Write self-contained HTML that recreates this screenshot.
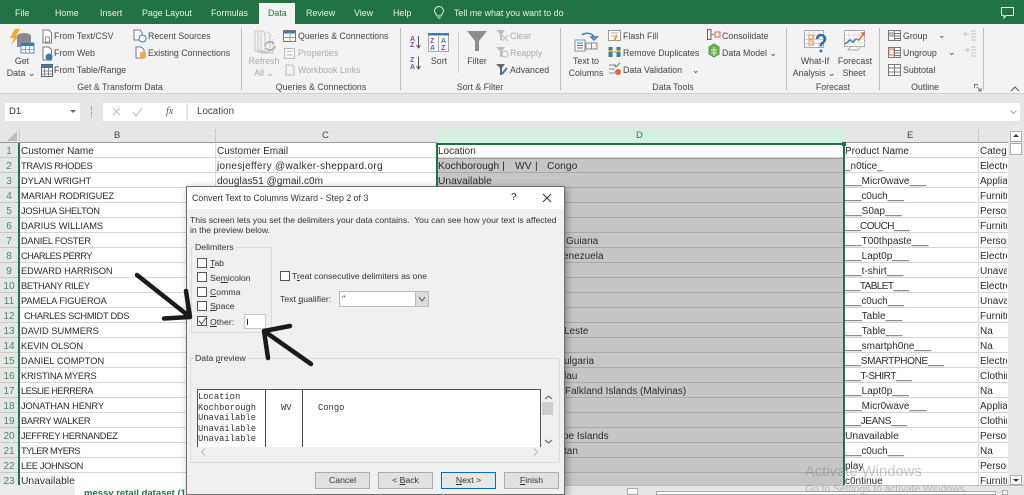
<!DOCTYPE html>
<html><head><meta charset="utf-8"><title>Excel</title>
<style>
*{box-sizing:border-box}
html,body{margin:0;padding:0;width:1024px;height:495px;overflow:hidden;background:#e6e6e6}
body{font-family:"Liberation Sans",sans-serif;color:#333}
#w{position:absolute;left:0;top:0;width:1024px;height:495px;overflow:hidden;filter:blur(.35px)}
.a{position:absolute;white-space:pre}
.t{position:absolute;white-space:pre;font-size:8.8px;line-height:12px;height:12px;color:#444}
.c{transform:translateX(-50%)}
.g{color:#aaa}
.tab{position:absolute;top:7px;font-size:8.9px;line-height:12px;color:#e8f2ec;white-space:pre}
.sep{position:absolute;top:28px;height:62px;width:1px;background:#bdbdbd}
#rows{position:absolute;left:0;top:143px;width:1008px}
.r{position:relative;height:15px;border-bottom:1px solid #d4d4d4;background:#fff}
.r i{position:absolute;left:0;top:0;width:18px;height:15px;background:#e6e6e6;border-bottom:1px solid #c8c8c8;font-style:normal;font-size:10px;line-height:17px;text-align:center;color:#4a8a6a}
.r b{position:absolute;top:0;left:437px;width:406px;height:15px;background:#c6c6c6;border-bottom:1px solid #a9a9a9;font-weight:normal}
.r s{position:absolute;top:0;width:1px;height:15px;background:#dcdcdc}
.r span{position:absolute;top:1px;font-size:10px;line-height:15px;color:#2b2b2b;white-space:pre}
.r span.B{font-size:9.3px}
.B{left:21px}.C{left:217px}.D{left:438px}.E{left:845px}
.F{left:980px;width:27px;overflow:hidden}
.d{font-size:8.7px;line-height:12px;color:#333;position:absolute;white-space:pre}
.u{text-decoration:underline}
.cb{position:absolute;left:197px;width:10px;height:10px;background:#fff;border:1px solid #555}
.btn{position:absolute;top:472px;width:55px;height:17px;background:#e1e1e1;border:1px solid #adadad;font-size:8.7px;line-height:15px;text-align:center;color:#333}
.fs{position:absolute;border:1px solid #dcdcdc}
.m{position:absolute;left:198px;font:8.8px/10px "Liberation Mono",monospace;color:#333;white-space:pre}
</style></head><body><div id="w">

<!-- title / tabs -->
<div class="a" style="left:0;top:0;width:1024px;height:24px;background:#217346"></div>
<div class="a" style="left:259px;top:3px;width:36px;height:22px;background:#f3f3f3"></div>
<span class="tab" style="left:15px">File</span>
<span class="tab" style="left:55px">Home</span>
<span class="tab" style="left:100px">Insert</span>
<span class="tab" style="left:142px">Page Layout</span>
<span class="tab" style="left:211px">Formulas</span>
<span class="tab" style="left:268px;color:#217346">Data</span>
<span class="tab" style="left:306px">Review</span>
<span class="tab" style="left:354px">View</span>
<span class="tab" style="left:393px">Help</span>
<span class="tab" style="left:454px">Tell me what you want to do</span>
<svg class="a" style="left:433px;top:6px" width="12" height="14" viewBox="0 0 12 14" fill="none" stroke="#e8f2ec"><path d="M4 10C3 7 1.500 7 1.500 5a4.500 4.500 0 0 1 9 0C10.500 7 9 7 8 10zM4.500 12h3"/></svg>
<svg class="a" style="left:1001px;top:7px" width="13" height="12" viewBox="0 0 13 12" fill="none" stroke="#e8f2ec"><path d="M.5.500h12v8H5l-2 2.500v-2.500H.5z"/></svg>

<!-- ribbon -->
<div class="a" style="left:0;top:24px;width:1024px;height:70px;background:#f3f3f3;border-bottom:1px solid #d2d2d2"></div>
<div class="sep" style="left:241px"></div><div class="sep" style="left:400px"></div><div class="sep" style="left:560px"></div><div class="sep" style="left:786px"></div><div class="sep" style="left:879px"></div><div class="sep" style="left:983px"></div>
<div class="a" style="left:458px;top:32px;width:1px;height:41px;background:#d0d0d0"></div>

<!-- Get & Transform -->
<svg class="a" style="left:9px;top:28px" width="26" height="28" viewBox="0 0 26 28"><path d="M6 1h5L7 8h3L2 17l3-7H1z" fill="#f0a830"/><ellipse cx="15" cy="8" rx="7" ry="3" fill="#8a8a8a"/><path d="M8 8v11h14V8z" fill="#8a8a8a"/><rect x="12" y="15" width="13" height="10" fill="#fff" stroke="#5d8ab5"/><path d="M12 15h13v3H12z" fill="#3f78ad"/><path d="M12 21.500h13M16.500 18v7M20.500 18v7" stroke="#8aa8c4" fill="none"/></svg>
<span class="t c" style="left:22px;top:55px">Get</span><span class="t c" style="left:21px;top:67px">Data ⌄</span>
<svg class="a" style="left:41px;top:29px" width="12" height="54" viewBox="0 0 12 54" fill="none"><path d="M2 1h6l2.500 3v10H2z" stroke="#777" fill="#fff"/><path d="M4.500 8h4v5h-4z" stroke="#999"/><path d="M2 18h6l2.500 3v10H2z" stroke="#777" fill="#fff"/><circle cx="8" cy="28" r="3.500" fill="#3f78ad"/><rect x=".5" y="35.500" width="11" height="12" fill="#fff" stroke="#666"/><path d="M0 36h12v3H0z" fill="#3f78ad"/><path d="M0 42h11M0 45h11M3.500 39v8M7.500 39v8" stroke="#888"/></svg>
<span class="t" style="left:54px;top:30px">From Text/CSV</span>
<span class="t" style="left:54px;top:47px">From Web</span>
<span class="t" style="left:54px;top:64px">From Table/Range</span>
<svg class="a" style="left:133px;top:29px" width="14" height="34" viewBox="0 0 14 34" fill="none"><path d="M1 1h6l2 2.500V11H1z" stroke="#777" fill="#fff"/><circle cx="9.500" cy="9.500" r="3.500" fill="#fff" stroke="#3f78ad"/><path d="M3 18h5l3 2.500V29H3z" stroke="#777" fill="#fff"/><path d="M7 23h6v6H7z" fill="#e9b04f"/></svg>
<span class="t" style="left:148px;top:30px">Recent Sources</span>
<span class="t" style="left:148px;top:47px">Existing Connections</span>
<span class="t c" style="left:120px;top:81px">Get &amp; Transform Data</span>

<!-- Queries -->
<svg class="a" style="left:254px;top:30px" width="24" height="24" viewBox="0 0 24 24" fill="none" stroke="#c4c4c4"><path d="M1 1h8l2 2v18H1zM4 2v20h12V4l-3-2M7 3v20h12V9"/><path d="M11 16a5 5 0 0 1 9-2M21 16a5 5 0 0 1-9 2" stroke="#aaa" stroke-width="1.500"/></svg>
<span class="t c g" style="left:264px;top:55px">Refresh</span><span class="t c g" style="left:264px;top:67px">All ⌄</span>
<svg class="a" style="left:283px;top:30px" width="14" height="46" viewBox="0 0 14 46" fill="none"><rect x=".5" y=".5" width="12" height="11" fill="#fff" stroke="#777"/><path d="M1 1h11v2.500H1z" fill="#3f78ad"/><path d="M7 4v7M1 7.500h11" stroke="#999"/><rect x="1.500" y="18.500" width="10" height="10" stroke="#bbb" fill="#f8f8f8"/><path d="M3.500 21.500h6M3.500 25h6" stroke="#bbb"/><path d="M3 35h6l2 2v8H3z" stroke="#bbb"/></svg>
<span class="t" style="left:298px;top:30px">Queries &amp; Connections</span>
<span class="t g" style="left:298px;top:47px">Properties</span>
<span class="t g" style="left:298px;top:64px">Workbook Links</span>
<span class="t c" style="left:321px;top:81px">Queries &amp; Connections</span>

<!-- Sort -->
<svg class="a" style="left:410px;top:33px" width="52" height="38" viewBox="0 0 52 38" font-family="Liberation Sans" font-size="7" font-weight="bold"><text x="0" y="8" fill="#8a4cb0">A</text><text x="0" y="14" fill="#8a4cb0">Z</text><text x="0" y="29" fill="#8a4cb0">Z</text><text x="0" y="36" fill="#8a4cb0">A</text><path d="M8.500 3v12M6.500 12l2 3 2-3M8.500 24v12M6.500 33l2 3 2-3" stroke="#555" fill="none"/><rect x="18.500" y=".5" width="20" height="18" fill="#fff" stroke="#aaa"/><path d="M18 0h21v2.500H18z" fill="#3f78ad"/><path d="M28.500 2v17" stroke="#aaa"/><text x="20" y="10" fill="#8a4cb0">Z</text><text x="20" y="17" fill="#3f78ad">A</text><text x="31" y="10" fill="#3f78ad">A</text><text x="31" y="17" fill="#8a4cb0">Z</text></svg>
<span class="t c" style="left:439px;top:55px">Sort</span>
<svg class="a" style="left:466px;top:30px" width="22" height="22" viewBox="0 0 22 22"><path d="M1 1h20l-8 10v10H9V11z" fill="#8d8d8d"/></svg>
<span class="t c" style="left:477px;top:55px">Filter</span>
<svg class="a" style="left:496px;top:30px" width="13" height="47" viewBox="0 0 13 47"><path d="M0 0h9L6 4v6H4V4z" fill="#bbb"/><path d="M6 5l6 6M12 5l-6 6" stroke="#bbb"/><path d="M0 17h9L6 21v6H4v-6z" fill="#bbb"/><circle cx="9" cy="24" r="3" fill="none" stroke="#bbb"/><path d="M0 34h9L6 38v7H4v-7z" fill="#666"/><path d="M6 44l5-6" stroke="#3f78ad" stroke-width="2"/></svg>
<span class="t g" style="left:510px;top:30px">Clear</span>
<span class="t g" style="left:510px;top:47px">Reapply</span>
<span class="t" style="left:510px;top:64px">Advanced</span>
<span class="t c" style="left:480px;top:81px">Sort &amp; Filter</span>

<!-- Data Tools -->
<svg class="a" style="left:574px;top:30px" width="25" height="22" viewBox="0 0 25 22" fill="none"><path d="M1 10h10v11H1z" fill="#fff" stroke="#888"/><path d="M3 13h6M3 15.500h6M3 18h6" stroke="#3f78ad"/><path d="M12 13h11v6H12z" stroke="#888"/><path d="M17.500 13v6" stroke="#888"/><path d="M8 5a7 5 0 0 1 12 2M20 10l-3-3h6z" stroke="#3f78ad" stroke-width="1.500"/></svg>
<span class="t c" style="left:586px;top:55px">Text to</span><span class="t c" style="left:586px;top:67px">Columns</span>
<svg class="a" style="left:608px;top:30px" width="14" height="46" viewBox="0 0 14 46" fill="none"><rect x=".5" y=".5" width="12" height="10" stroke="#999" fill="#fff"/><path d="M3 3h7M3 6h5" stroke="#aaa"/><path d="M9 5l-3 6" stroke="#e2a42c" stroke-width="2"/><rect x=".5" y="17" width="4" height="10" fill="#3f78ad"/><rect x="8.500" y="17" width="4" height="10" fill="#3f78ad"/><path d="M.5 21h4M8.500 21h4" stroke="#e2a42c" stroke-width="2"/><path d="M5 22h3" stroke="#888"/><path d="M1 35h7M1 39h6M1 43h6" stroke="#888"/><path d="M6 35l2 2 4-4" stroke="#4c9a5f"/><circle cx="10" cy="42" r="3" fill="#e2683c"/></svg>
<span class="t" style="left:623px;top:30px">Flash Fill</span>
<span class="t" style="left:623px;top:47px">Remove Duplicates</span>
<span class="t" style="left:623px;top:64px">Data Validation</span><span class="t" style="left:692px;top:64px">⌄</span>
<svg class="a" style="left:707px;top:29px" width="14" height="30" viewBox="0 0 14 30" fill="none"><rect x=".5" y=".5" width="3.500" height="10" stroke="#666"/><path d="M4 5.500h3" stroke="#888"/><rect x="8" y="3" width="5" height="5" stroke="#e2683c"/><path d="M2 18l5-3 5 3v7l-5 3-5-3z" fill="#69b34c" stroke="#4a9a3a"/><path d="M4 21h6M4 24h6M7 18v9" stroke="#dff0d5"/></svg>
<span class="t" style="left:722px;top:30px">Consolidate</span>
<span class="t" style="left:722px;top:47px">Data Model ⌄</span>
<span class="t c" style="left:673px;top:81px">Data Tools</span>

<!-- Forecast -->
<svg class="a" style="left:804px;top:30px" width="24" height="24" viewBox="0 0 24 24" fill="none"><rect x=".5" y=".5" width="19" height="17" fill="#fff" stroke="#aaa"/><path d="M5 1v16M10 1v16M15 1v16M1 5h18M1 9.500h18M1 13.500h18" stroke="#ccc"/><rect x="5" y="5" width="4" height="4" stroke="#e8914a"/><rect x="5" y="11" width="4" height="4" stroke="#e8914a"/><path d="M13 9a4 4 0 1 1 6 3.500c-2 1-2 2-2 4" stroke="#2b6fb0" stroke-width="2.500"/><circle cx="17" cy="21" r="1.500" fill="#2b6fb0"/></svg>
<span class="t c" style="left:815px;top:55px">What-If</span><span class="t c" style="left:814px;top:67px">Analysis ⌄</span>
<svg class="a" style="left:844px;top:30px" width="23" height="22" viewBox="0 0 23 22" fill="none"><rect x=".5" y=".5" width="20" height="16" fill="#fff" stroke="#aaa"/><path d="M5 1v16M10 1v16M15 1v16M1 5h20M1 9h20M1 13h20" stroke="#ddd"/><path d="M1 14l5-4 3 2 3-3" stroke="#3f78ad" stroke-width="1.500"/><path d="M12 9l3 1 5-7M17 3h3v3" stroke="#e2683c" stroke-width="1.500"/><path d="M6 17l-2 3h10l2-3" stroke="#aaa"/></svg>
<span class="t c" style="left:855px;top:55px">Forecast</span><span class="t c" style="left:854px;top:67px">Sheet</span>
<span class="t c" style="left:833px;top:81px">Forecast</span>

<!-- Outline -->
<svg class="a" style="left:888px;top:30px" width="14" height="46" viewBox="0 0 14 46" fill="none" stroke="#777"><rect x=".5" y=".5" width="12" height="10" fill="#fff"/><path d="M6.500 1v9M7 3.500h5M7 6h5M7 8.500h5"/><rect x="2" y="3" width="3" height="3"/><rect x=".5" y="17.500" width="12" height="10" fill="#fff"/><path d="M6.500 18v9M7 20.500h5M7 23h5M7 25.500h5"/><rect x="1" y="19" width="5" height="6" stroke="#e2683c"/><rect x=".5" y="34.500" width="12" height="11" fill="#fff"/><path d="M6.500 35v10M1 38h11M1 42h11"/></svg>
<span class="t" style="left:903px;top:30px">Group</span><span class="t" style="left:938px;top:29px">⌄</span>
<span class="t" style="left:903px;top:47px">Ungroup</span><span class="t" style="left:948px;top:46px">⌄</span>
<span class="t" style="left:903px;top:64px">Subtotal</span>
<svg class="a" style="left:963px;top:30px" width="14" height="28" viewBox="0 0 14 28" fill="none" stroke="#c4c4c4"><path d="M1 4h5M3 2L1 4l2 2M8 1h5M8 4h5M8 7h5M8 10h5"/><path d="M1 20h5M4 18l2 2-2 2M8 17h5M8 20h5M8 23h5M8 26h5"/></svg>
<span class="t c" style="left:925px;top:81px">Outline</span>
<svg class="a" style="left:974px;top:84px" width="8" height="8" viewBox="0 0 8 8" fill="none" stroke="#777"><path d="M.5 4V.5H4M3 3l4 4M4 7h3V4"/></svg>
<svg class="a" style="left:1010px;top:86px" width="10" height="6" viewBox="0 0 10 6" fill="none" stroke="#555"><path d="M1 5l4-4 4 4"/></svg>

<!-- formula bar -->
<div class="a" style="left:5px;top:103px;width:75px;height:18px;background:#fff;font-size:9.5px;line-height:18px;padding-left:4px;color:#333">D1</div>
<div class="a" style="left:70px;top:110px;border:3px solid transparent;border-top:3px solid #666"></div>
<div class="a" style="left:91px;top:107px;width:1px;height:10px;border-left:1px dotted #888"></div>
<div class="a" style="left:103px;top:103px;width:83px;height:18px;background:#fff"></div>
<svg class="a" style="left:112px;top:106px" width="60" height="12" viewBox="0 0 60 12" fill="none" stroke="#bbb"><path d="M1 2l7 7M8 2l-7 7M21 6l3 4 6-8"/></svg>
<span class="a" style="left:166px;top:106px;font:italic 10px/12px 'Liberation Serif',serif;color:#555">fx</span>
<div class="a" style="left:188px;top:103px;width:832px;height:18px;background:#fff;font-size:9.800px;line-height:18px;padding-left:9px;color:#444">Location</div>
<svg class="a" style="left:1010px;top:110px" width="7" height="4" viewBox="0 0 7 4" fill="none" stroke="#aaa"><path d="M.5.500l3 3 3-3"/></svg>

<!-- col headers -->
<div class="a" style="left:0;top:125px;width:1008px;height:18px;background:#e6e6e6;border-bottom:1px solid #9b9b9b"></div>
<svg class="a" style="left:7px;top:131px" width="11" height="11"><path d="M10 0v10H0z" fill="#bdbdbd"/></svg>
<div class="a" style="left:437px;top:129px;width:406px;height:14px;background:#d3f0e0"></div>
<span class="a" style="left:114px;top:129px;font-size:9.500px;line-height:14px;color:#444">B</span>
<span class="a" style="left:322px;top:129px;font-size:9.500px;line-height:14px;color:#444">C</span>
<span class="a" style="left:636px;top:129px;font-size:9.500px;line-height:14px;color:#2c7a52">D</span>
<span class="a" style="left:907px;top:129px;font-size:9.500px;line-height:14px;color:#444">E</span>
<div class="a" style="left:215px;top:129px;width:1px;height:14px;background:#c8c8c8"></div>
<div class="a" style="left:978px;top:129px;width:1px;height:14px;background:#c8c8c8"></div>
<div class="a" style="left:19px;top:129px;width:1px;height:14px;background:#c8c8c8"></div>

<!-- grid -->
<div id="rows">
<div class="r" style="background:#fff"><i>1</i><s style="left:215px"></s><s style="left:978px"></s><span style="left:21px">Customer Name</span><span class="C">Customer Email</span><span class="D">Location</span><span class="E">Product Name</span><span class="F">Category</span></div>
<div class="r"><i>2</i><b></b><s style="left:215px"></s><s style="left:978px"></s><span class="B" style="letter-spacing:-.3px">TRAVIS RHODES</span><span class="C" style="letter-spacing:.33px">jonesjeffery @walker-sheppard.org</span><span class="D" style="font-size:10.300px">Kochborough |</span><span style="left:515px;font-size:10.300px">WV</span><span style="left:535px;font-size:10.300px">|</span><span style="left:547px;font-size:10.300px">Congo</span><span class="E">_n0tice_</span><span class="F">Electronics</span></div>
<div class="r"><i>3</i><b></b><s style="left:215px"></s><s style="left:978px"></s><span class="B" style="letter-spacing:-.1px">DYLAN WRIGHT</span><span class="C" style="letter-spacing:.07px">douglas51 @gmail.c0m</span><span class="D" style="font-size:10.300px">Unavailable</span><span class="E">___Micr0wave___</span><span class="F">Appliances</span></div>
<div class="r"><i>4</i><b></b><s style="left:978px"></s><span class="B" style="letter-spacing:-.1px">MARIAH RODRIGUEZ</span><span class="E" style="letter-spacing:-.1px">___c0uch___</span><span class="F">Furniture</span></div>
<div class="r"><i>5</i><b></b><s style="left:978px"></s><span class="B" style="letter-spacing:-.3px">JOSHUA SHELTON</span><span class="E">___S0ap___</span><span class="F">Personal</span></div>
<div class="r"><i>6</i><b></b><s style="left:978px"></s><span class="B">DARIUS WILLIAMS</span><span class="E" style="letter-spacing:-.55px">___COUCH___</span><span class="F">Furniture</span></div>
<div class="r"><i>7</i><b></b><s style="left:978px"></s><span class="B" style="letter-spacing:-.3px">DANIEL FOSTER</span><span style="left:566px">Guiana</span><span class="E">___T00thpaste___</span><span class="F">Personal</span></div>
<div class="r"><i>8</i><b></b><s style="left:978px"></s><span class="B" style="letter-spacing:-.58px">CHARLES PERRY</span><span style="left:563px">enezuela</span><span class="E">___Lapt0p___</span><span class="F">Electronics</span></div>
<div class="r"><i>9</i><b></b><s style="left:978px"></s><span class="B" style="letter-spacing:-.07px">EDWARD HARRISON</span><span class="E">___t-shirt___</span><span class="F">Unavailable</span></div>
<div class="r"><i>10</i><b></b><s style="left:978px"></s><span class="B" style="letter-spacing:-.34px">BETHANY RILEY</span><span class="E" style="letter-spacing:-.6px">___TABLET___</span><span class="F">Electronics</span></div>
<div class="r"><i>11</i><b></b><s style="left:978px"></s><span class="B" style="letter-spacing:-.13px">PAMELA FIGUEROA</span><span class="E" style="letter-spacing:-.1px">___c0uch___</span><span class="F">Unavailable</span></div>
<div class="r"><i>12</i><b></b><s style="left:978px"></s><span class="B" style="left:24px;letter-spacing:-.3px">CHARLES SCHMIDT DDS</span><span class="E">___Table___</span><span class="F">Furniture</span></div>
<div class="r"><i>13</i><b></b><s style="left:978px"></s><span class="B">DAVID SUMMERS</span><span style="left:564px">Leste</span><span class="E">___Table___</span><span class="F">Na</span></div>
<div class="r"><i>14</i><b></b><s style="left:978px"></s><span class="B" style="letter-spacing:-.1px">KEVIN OLSON</span><span class="E">___smartph0ne___</span><span class="F">Na</span></div>
<div class="r"><i>15</i><b></b><s style="left:978px"></s><span class="B">DANIEL COMPTON</span><span style="left:564px">ulgaria</span><span class="E" style="letter-spacing:-.32px">___SMARTPHONE___</span><span class="F">Electronics</span></div>
<div class="r"><i>16</i><b></b><s style="left:978px"></s><span class="B" style="letter-spacing:-.18px">KRISTINA MYERS</span><span style="left:564px">lau</span><span class="E" style="letter-spacing:-.45px">___T-SHIRT___</span><span class="F">Clothing</span></div>
<div class="r"><i>17</i><b></b><s style="left:978px"></s><span class="B" style="letter-spacing:-.55px">LESLIE HERRERA</span><span style="left:565px">Falkland Islands (Malvinas)</span><span class="E">___Lapt0p___</span><span class="F">Na</span></div>
<div class="r"><i>18</i><b></b><s style="left:978px"></s><span class="B" style="letter-spacing:-.1px">JONATHAN HENRY</span><span class="E">___Micr0wave___</span><span class="F">Appliances</span></div>
<div class="r"><i>19</i><b></b><s style="left:978px"></s><span class="B" style="letter-spacing:-.33px">BARRY WALKER</span><span class="E" style="letter-spacing:-.35px">___JEANS___</span><span class="F">Clothing</span></div>
<div class="r"><i>20</i><b></b><s style="left:978px"></s><span class="B" style="letter-spacing:-.3px">JEFFREY HERNANDEZ</span><span style="left:563px">oe Islands</span><span class="E" style="font-size:10.300px">Unavailable</span><span class="F">Personal</span></div>
<div class="r"><i>21</i><b></b><s style="left:978px"></s><span class="B" style="letter-spacing:-.6px">TYLER MYERS</span><span style="left:564px">tan</span><span class="E" style="letter-spacing:-.1px">___c0uch___</span><span class="F">Na</span></div>
<div class="r"><i>22</i><b></b><s style="left:978px"></s><span class="B" style="letter-spacing:-.33px">LEE JOHNSON</span><span class="E">play</span><span class="F">Personal</span></div>
<div class="r"><i>23</i><b></b><s style="left:978px"></s><span style="left:21px;font-size:10.300px">Unavailable</span><span class="E">c0ntinue</span><span class="F">Furniture</span></div>
</div>
<div class="a" style="left:437px;top:158px;width:406px;height:1px;background:#9f9f9f"></div>
<!-- selection borders -->
<div class="a" style="left:436px;top:143px;width:408px;height:1.500px;background:#217346"></div>
<div class="a" style="left:436px;top:143px;width:1.500px;height:342px;background:#217346"></div>
<div class="a" style="left:843px;top:143px;width:1.500px;height:342px;background:#217346"></div>
<div class="a" style="left:842px;top:142px;width:4px;height:4px;background:#217346"></div>
<div class="a" style="left:18px;top:143px;width:1.500px;height:352px;background:#217346"></div>

<!-- right scrollbar -->
<div class="a" style="left:1008px;top:125px;width:16px;height:370px;background:#e9e9e9"></div>
<div class="a" style="left:1010px;top:131px;width:12px;height:11px;background:#fff;border:1px solid #aaa"></div>
<div class="a" style="left:1013px;top:134px;border:3px solid transparent;border-bottom:3px solid #333;border-top:0"></div>
<div class="a" style="left:1010px;top:143px;width:12px;height:12px;background:#fff;border:1px solid #aaa"></div>
<div class="a" style="left:1010px;top:475px;width:12px;height:10px;background:#fff;border:1px solid #aaa"></div>
<div class="a" style="left:1013px;top:479px;border:3px solid transparent;border-top:3px solid #333;border-bottom:0"></div>

<!-- bottom bar -->
<div class="a" style="left:0;top:485px;width:1024px;height:10px;background:#e6e6e6;border-top:1px solid #bdbdbd"></div>
<div class="a" style="left:0;top:485px;width:75px;height:10px;background:#ececec"></div>
<div class="a" style="left:75px;top:485px;width:115px;height:10px;background:#fff"></div>
<span class="a" style="left:84px;top:488px;font-size:9.500px;line-height:12px;font-weight:bold;color:#217346">messy retail dataset (1)</span>
<div class="a" style="left:627px;top:488px;width:11px;height:7px;background:#fff;border:1px solid #aaa"></div>
<div class="a" style="left:656px;top:491px;width:340px;height:4px;background:#fff;border:1px solid #aaa"></div>
<div class="a" style="left:1002px;top:490px;width:6px;height:5px;background:#fff;border:1px solid #aaa"></div>

<!-- watermark -->
<span class="a" style="left:805px;top:463px;font-size:14.800px;line-height:18px;color:rgba(120,120,120,.42)">Activate Windows</span>
<span class="a" style="left:805px;top:484px;font-size:10.300px;line-height:12px;color:rgba(120,120,120,.42)">Go to Settings to activate Windows.</span>

<!-- dialog -->
<div class="a" style="left:186px;top:186px;width:379px;height:309px;background:#f0f0f0;border:1px solid #6f6f6f;box-shadow:2px 2px 7px rgba(0,0,0,.35)"></div>
<div class="a" style="left:187px;top:187px;width:377px;height:22px;background:#fff"></div>
<span class="d" style="left:192px;top:192px;font-size:8.800px">Convert Text to Columns Wizard - Step 2 of 3</span>
<span class="d" style="left:511px;top:192px;font-size:10px">?</span>
<svg class="a" style="left:542px;top:193px" width="10" height="10" fill="none" stroke="#333"><path d="M1 1l8 8M9 1l-8 8"/></svg>
<span class="d" style="left:190px;top:214px;font-size:8.650px">This screen lets you set the delimiters your data contains.  You can see how your text is affected</span>
<span class="d" style="left:190px;top:224px;font-size:8.650px">in the preview below.</span>

<div class="fs" style="left:191px;top:247px;width:81px;height:86px"></div>
<span class="d" style="left:194px;top:241px;background:#f0f0f0;padding:0 1px">Delimiters</span>
<div class="cb" style="top:258px"></div><span class="d" style="left:210px;top:257px"><span class="u">T</span>ab</span>
<div class="cb" style="top:272px"></div><span class="d" style="left:210px;top:272px">Se<span class="u">m</span>icolon</span>
<div class="cb" style="top:287px"></div><span class="d" style="left:210px;top:286px"><span class="u">C</span>omma</span>
<div class="cb" style="top:301px"></div><span class="d" style="left:210px;top:300px"><span class="u">S</span>pace</span>
<div class="cb" style="top:316px"></div><svg class="a" style="left:198px;top:317px" width="9" height="9" fill="none" stroke="#444"><path d="M1 4l2.500 3L8 1"/></svg>
<span class="d" style="left:210px;top:316px"><span class="u">O</span>ther:</span>
<div class="a" style="left:244px;top:314px;width:22px;height:15px;background:#fff;border:1px solid #c8c8c8"></div>
<div class="a" style="left:247px;top:319px;width:1px;height:6px;background:#333"></div>

<div class="cb" style="left:280px;top:271px"></div>
<span class="d" style="left:292px;top:270px;font-size:8.600px">T<span class="u">r</span>eat consecutive delimiters as one</span>
<span class="d" style="left:280px;top:293px">Text <span class="u">q</span>ualifier:</span>
<div class="a" style="left:339px;top:291px;width:90px;height:16px;background:#fff;border:1px solid #bbb;font-size:9px;line-height:14px;padding-left:2px;color:#333">"</div>
<div class="a" style="left:415px;top:292px;width:13px;height:14px;background:#dcdcdc;border-left:1px solid #bbb"></div>
<svg class="a" style="left:418px;top:296px" width="8" height="6" fill="none" stroke="#555"><path d="M1 1l3 4 3-4"/></svg>

<div class="fs" style="left:190px;top:358px;width:370px;height:105px"></div>
<span class="d" style="left:194px;top:352px;background:#f0f0f0;padding:0 1px">Data <span class="u">p</span>review</span>
<div class="a" style="left:197px;top:389px;width:344px;height:58px;background:#fff;border:1px solid #555;border-width:1px 1px 0 1px"></div>
<div class="a" style="left:265px;top:390px;width:1px;height:57px;background:#444"></div>
<div class="a" style="left:302px;top:390px;width:1px;height:57px;background:#444"></div>
<span class="m" style="top:392px">Location</span>
<span class="m" style="top:403px">Kochborough</span>
<span class="m" style="top:413px">Unavailable</span>
<span class="m" style="top:424px">Unavailable</span>
<span class="m" style="top:434px">Unavailable</span>
<span class="m" style="left:281px;top:403px">WV</span>
<span class="m" style="left:318px;top:403px">Congo</span>
<svg class="a" style="left:542px;top:393px" width="13" height="54" fill="none" stroke="#555"><path d="M3 6l3.500-3 3.500 3M3 47l3.500 3 3.500-3"/></svg>
<div class="a" style="left:542px;top:402px;width:11px;height:13px;background:#cdcdcd"></div>
<svg class="a" style="left:200px;top:447px" width="340" height="10" fill="none" stroke="#bbb"><path d="M5 1.500L1.500 5 5 8.500M334 1.500L337.500 5 334 8.500"/></svg>

<div class="btn" style="left:315px">Cancel</div>
<div class="btn" style="left:378px">&lt; <span class="u">B</span>ack</div>
<div class="btn" style="left:441px;border:1.500px solid #0a6cc4;background:#e6e6e6"><span class="u">N</span>ext &gt;</div>
<div class="btn" style="left:504px"><span class="u">F</span>inish</div>

<!-- arrows -->
<svg class="a" style="left:0;top:0" width="1024" height="495" fill="none" stroke="#1a1a1a" stroke-width="4.500" stroke-linecap="round" stroke-linejoin="round"><path d="M137 275L190 317M164 318.500L190 317M186 291L190 317"/><path d="M264 331L311 364M264 331L290 326M264 331L268 358"/></svg>

</div></body></html>
